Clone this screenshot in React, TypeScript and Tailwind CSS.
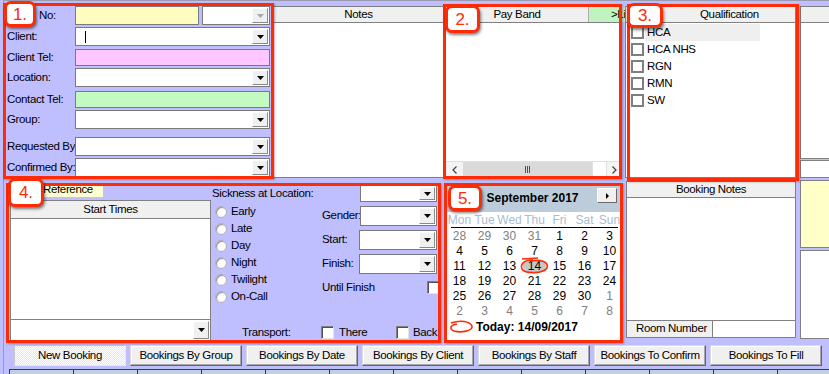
import React from 'react';

const RED = 'border-[#FF2B06]';

// кнопка со стрелкой для комбобоксов
function DownBtn({ disabled }: { disabled?: boolean }) {
  return (
    <div className="w-[16px] h-full shrink-0 bg-[#F0F0F0] flex items-center justify-center border border-t-white border-l-white border-r-[#8A8A8A] border-b-[#8A8A8A]">
      <svg width="7" height="4" viewBox="0 0 7 4">
        <path d="M0 0h7L3.5 4z" fill={disabled ? '#A8A8A8' : '#000'} />
      </svg>
    </div>
  );
}

function Combo({ className, disabled, children }: { className: string; disabled?: boolean; children?: React.ReactNode }) {
  return (
    <div className={`flex items-stretch border border-[#7A7A7A] bg-white p-[1px] ${className}`}>
      <div className="flex-1 flex items-center">{children}</div>
      <DownBtn disabled={disabled} />
    </div>
  );
}

function Header({ children, className = '' }: { children?: React.ReactNode; className?: string }) {
  return (
    <div className={`h-[16px] shrink-0 bg-[#F0F0F0] border-b border-[#808080] flex items-center ${className}`}>
      {children}
    </div>
  );
}

function Radio() {
  return <div className="w-[12px] h-[12px] shrink-0 rounded-full bg-white border border-[#B0B0B0] shadow-[inset_1px_1px_1px_#8C8C8C]" />;
}

function Check() {
  return (
    <div className="w-[13px] h-[13px] shrink-0 bg-white border border-t-[#808080] border-l-[#808080] border-r-[#E4E4E4] border-b-[#E4E4E4] shadow-[inset_1px_1px_0_#505050]" />
  );
}

function Box({ className }: { className: string }) {
  return <div className={`absolute border-[3px] ${RED} shadow-[1px_1px_2px_rgba(0,0,0,0.3)] ${className}`} />;
}

function Badge({ n, className }: { n: number; className: string }) {
  return (
    <div
      className={`absolute flex items-center justify-center bg-white border-[3px] ${RED} rounded-[7px] shadow-[1px_2px_3px_rgba(0,0,0,0.5)] text-[#FF2B06] text-[17px] tracking-normal ${className}`}
    >
      {n}.
    </div>
  );
}

const quals = ['HCA', 'HCA NHS', 'RGN', 'RMN', 'SW'];
const shifts = ['Early', 'Late', 'Day', 'Night', 'Twilight', 'On-Call'];
const dayNames = ['Mon', 'Tue', 'Wed', 'Thu', 'Fri', 'Sat', 'Sun'];

// [число, из другого месяца]
const weeks: [number, boolean][][] = [
  [[28, true], [29, true], [30, true], [31, true], [1, false], [2, false], [3, false]],
  [[4, false], [5, false], [6, false], [7, false], [8, false], [9, false], [10, false]],
  [[11, false], [12, false], [13, false], [14, false], [15, false], [16, false], [17, false]],
  [[18, false], [19, false], [20, false], [21, false], [22, false], [23, false], [24, false]],
  [[25, false], [26, false], [27, false], [28, false], [29, false], [30, false], [1, true]],
  [[2, true], [3, true], [4, true], [5, true], [6, true], [7, true], [8, true]],
];

const tabs = [
  'New Booking',
  'Bookings By Group',
  'Bookings By Date',
  'Bookings By Client',
  'Bookings By Staff',
  'Bookings To Confirm',
  'Bookings To Fill',
];

function LeftForm() {
  return (
    <div className="w-[268px] shrink-0 pl-[3px] flex flex-col">
      <div className="flex items-center h-[19px]">
        <span className="w-[68px] shrink-0 pl-[32px]">No:</span>
        <div className="w-[124px] h-full shrink-0 bg-[#FFFCC0] border border-[#7A7A7A]" />
        <Combo className="w-[68px] h-full ml-[3px] shrink-0" disabled />
      </div>
      <div className="flex items-center h-[19px] mt-[2px]">
        <span className="w-[68px] shrink-0">Client:</span>
        <Combo className="w-[195px] h-full shrink-0">
          <div className="ml-[8px] w-[1px] h-[12px] bg-black" />
        </Combo>
      </div>
      <div className="flex items-center h-[17px] mt-[3px]">
        <span className="w-[68px] shrink-0">Client Tel:</span>
        <div className="w-[195px] h-full shrink-0 bg-[#FFC6FF] border border-[#7A7A7A]" />
      </div>
      <div className="flex items-center h-[19px] mt-[2px]">
        <span className="w-[68px] shrink-0">Location:</span>
        <Combo className="w-[195px] h-full shrink-0" />
      </div>
      <div className="flex items-center h-[17px] mt-[4px]">
        <span className="w-[68px] shrink-0">Contact Tel:</span>
        <div className="w-[195px] h-full shrink-0 bg-[#C2FAC2] border border-[#7A7A7A]" />
      </div>
      <div className="flex items-center h-[19px] mt-[2px]">
        <span className="w-[68px] shrink-0">Group:</span>
        <Combo className="w-[195px] h-full shrink-0" />
      </div>
      <div className="flex items-center h-[19px] mt-[8px]">
        <span className="w-[68px] shrink-0 whitespace-nowrap">Requested By</span>
        <Combo className="w-[195px] h-full shrink-0" />
      </div>
      <div className="flex items-center h-[19px] mt-[2px]">
        <span className="w-[68px] shrink-0 whitespace-nowrap">Confirmed By:</span>
        <Combo className="w-[195px] h-full shrink-0" />
      </div>
    </div>
  );
}

function Calendar() {
  return (
    <div className="ml-[6px] mt-[4px] w-[175px] h-[158px] shrink-0 bg-white flex flex-col text-[12px] tracking-normal">
      <div className="h-[28px] shrink-0 bg-[#BDCCDB] grid grid-cols-[24px_1fr_28px] items-center">
        <div />
        <div className="text-center font-bold">September 2017</div>
        <div className="self-start mt-[4px] ml-[3px] w-[20px] h-[15px] bg-[#F0F0F0] border border-t-white border-l-white border-r-[#6A6A6A] border-b-[#6A6A6A] flex items-center justify-center">
          <svg width="3" height="6" viewBox="0 0 3 6">
            <path d="M0 0L3 3L0 6z" fill="#000" />
          </svg>
        </div>
      </div>
      <div className="h-[15px] shrink-0 grid grid-cols-7 items-center text-[#A9BDD2]">
        {dayNames.map(d => (
          <div key={d} className="text-center">{d}</div>
        ))}
      </div>
      <div className="h-[1px] shrink-0 bg-black mx-[4px]" />
      {weeks.map((w, i) => (
        <div key={i} className="h-[15px] shrink-0 grid grid-cols-7 items-center">
          {w.map(([n, other], j) => (
            <div key={j} className={`text-center ${other ? 'text-[#808080]' : 'text-black'}`}>
              {n === 14 && !other ? (
                <span className="inline-block bg-[#C8C8C8] rounded-full px-[5px] leading-[12px]">14</span>
              ) : (
                n
              )}
            </div>
          ))}
        </div>
      ))}
      <div className="mt-[2px] h-[14px] shrink-0 flex items-center pl-[29px] font-bold">Today: 14/09/2017</div>
    </div>
  );
}

export default function App() {
  return (
    <div className="relative w-[829px] h-[374px] overflow-hidden bg-[#BFBFFF] text-black font-['Liberation_Sans',Arial,sans-serif] text-[11.5px] tracking-[-0.35px] leading-none">
      <div className="ml-[3px] h-full border-l border-t border-[#9A9AB0] pt-[5px] flex flex-col">
        {/* верхний ряд */}
        <div className="flex h-[172px] shrink-0">
          <LeftForm />

          <div className="w-[173px] h-full shrink-0 border border-[#808080] bg-white flex flex-col">
            <Header className="justify-center">Notes</Header>
          </div>

          <div className="w-[177px] h-full shrink-0 border border-[#808080] bg-white flex flex-col">
            <div className="h-[16px] shrink-0 flex border-b border-[#808080]">
              <div className="w-[143px] shrink-0 bg-[#F0F0F0] border-r border-[#B0B0B0] flex items-center justify-center">Pay Band</div>
              <div className="relative w-[36px] shrink-0 bg-[#BFF3BF] flex items-center pl-[22px] overflow-hidden whitespace-nowrap">&gt;Li</div>
            </div>
            <div className="flex-1" />
            <div className="h-[16px] shrink-0 flex border-t border-[#E0E0E0]">
              <div className="w-[17px] shrink-0 bg-[#F4F4F4] flex items-center justify-center">
                <svg width="5" height="8" viewBox="0 0 5 8">
                  <path d="M4.5 0.5L1 4L4.5 7.5" stroke="#404040" fill="none" strokeWidth="1.2" />
                </svg>
              </div>
              <div className="w-[129px] shrink-0 bg-[#DADADA] flex items-center justify-center">
                <div className="flex gap-[1px]">
                  <div className="w-[1px] h-[7px] bg-[#505050]" />
                  <div className="w-[1px] h-[7px] bg-[#505050]" />
                  <div className="w-[1px] h-[7px] bg-[#505050]" />
                </div>
              </div>
              <div className="w-[15px] shrink-0 bg-white border-x border-[#E0E0E0]" />
              <div className="flex-1 bg-[#F4F4F4] flex items-center justify-center">
                <svg width="5" height="8" viewBox="0 0 5 8">
                  <path d="M0.5 0.5L4 4L0.5 7.5" stroke="#404040" fill="none" strokeWidth="1.2" />
                </svg>
              </div>
            </div>
          </div>

          <div className="ml-[3px] w-[171px] h-full shrink-0 border border-[#808080] bg-white flex flex-col">
            <Header className="pl-[74px]">Qualification</Header>
            <div className="flex flex-col pt-[1px]">
              {quals.map((q, i) => (
                <div key={q} className="h-[17px] flex items-center pl-[5px]">
                  <div className="w-[13px] h-[13px] shrink-0 border-2 border-[#7F7F7F] bg-white" />
                  <div className={`ml-[1px] w-[115px] h-full flex items-center pl-[2px] ${i === 0 ? 'bg-[#EFEFEF]' : ''}`}>{q}</div>
                </div>
              ))}
            </div>
          </div>

          <div className="ml-[4px] w-[40px] shrink-0 flex flex-col">
            <div className="h-[153px] shrink-0 border border-[#808080] bg-white flex flex-col">
              <Header />
            </div>
            <div className="mt-[1px] h-[18px] shrink-0 border border-[#808080] bg-white" />
          </div>
        </div>

        {/* средний ряд */}
        <div className="flex mt-[2px] h-[163px] shrink-0">
          <div className="w-[437px] shrink-0 flex">
            <div className="ml-[6px] w-[201px] shrink-0 flex flex-col">
              <div className="mt-[3px] ml-[30px] w-[63px] h-[14px] shrink-0 bg-[#FFFFD2] pl-[3px] flex items-center">Reference</div>
              <div className="mt-[3px] h-[141px] shrink-0 border border-[#808080] bg-white flex flex-col">
                <Header className="h-[18px] justify-center">Start Times</Header>
                <div className="flex-1" />
                <div className="h-[21px] shrink-0 border-t border-[#808080] flex justify-end p-[1px]">
                  <DownBtn />
                </div>
              </div>
            </div>

            <div className="w-[230px] shrink-0 flex flex-col">
              <div className="mt-[5px] h-[17px] shrink-0 flex items-center">
                <span className="flex-1 pl-[1px] whitespace-nowrap">Sickness at Location:</span>
                <Combo className="w-[77px] h-full mr-[4px] shrink-0" />
              </div>
              <div className="flex mt-[1px]">
                <div className="w-[111px] shrink-0 pl-[4px] flex flex-col">
                  {shifts.map(s => (
                    <div key={s} className="h-[17px] flex items-center gap-[4px]">
                      <Radio />
                      <span>{s}</span>
                    </div>
                  ))}
                </div>
                <div className="w-[119px] shrink-0 flex flex-col pt-[3px]">
                  <div className="h-[20px] flex items-center">
                    <span className="w-[38px] shrink-0">Gender:</span>
                    <Combo className="w-[77px] h-full shrink-0" />
                  </div>
                  <div className="h-[20px] mt-[4px] flex items-center">
                    <span className="w-[37px] shrink-0">Start:</span>
                    <Combo className="w-[78px] h-full shrink-0" />
                  </div>
                  <div className="h-[20px] mt-[4px] flex items-center">
                    <span className="w-[37px] shrink-0">Finish:</span>
                    <Combo className="w-[78px] h-full shrink-0" />
                  </div>
                  <div className="h-[13px] mt-[7px] flex items-center">
                    <span className="w-[105px] shrink-0">Until Finish</span>
                    <Check />
                  </div>
                </div>
              </div>
              <div className="mt-auto mb-[4px] h-[13px] shrink-0 flex items-center">
                <span className="w-[110px] shrink-0 pl-[31px]">Transport:</span>
                <Check />
                <span className="w-[62px] shrink-0 pl-[5px]">There</span>
                <Check />
                <span className="pl-[4px]">Back</span>
              </div>
            </div>
          </div>

          <Calendar />

          <div className="ml-[4px] mt-[1px] w-[170px] h-[157px] shrink-0 border border-[#808080] bg-white flex flex-col">
            <Header className="justify-center">Booking Notes</Header>
            <div className="flex-1" />
            <div className="h-[17px] shrink-0 border-t border-[#808080] flex">
              <div className="w-[86px] shrink-0 bg-[#F0F0F0] border-r border-[#808080] flex items-center pl-[9px]">Room Number</div>
            </div>
          </div>

          <div className="ml-[4px] w-[40px] shrink-0 flex flex-col">
            <div className="h-[68px] shrink-0 border border-[#808080] bg-[#FFFFC8]" />
            <div className="mt-[2px] h-[89px] shrink-0 border border-[#808080] bg-white" />
          </div>
        </div>

        {/* вкладки */}
        <div className="mt-[2px] h-[21px] shrink-0 flex gap-[4px] pl-[10px]">
          {tabs.map((t, i) => (
            <div
              key={t}
              className={`w-[112px] h-full shrink-0 flex items-center justify-center whitespace-nowrap border ${
                i === 0
                  ? 'bg-[repeating-conic-gradient(#FFFFFF_0_25%,#E6E6E6_0_50%)] bg-[length:2px_2px] border-t-[#C8C8C8] border-l-[#C8C8C8] border-r-[#E8E8E8] border-b-[#E8E8E8]'
                  : 'bg-[#F0F0F0] border-t-[#DCDCDC] border-l-[#DCDCDC] border-r-[#646464] border-b-[#646464] shadow-[inset_-1px_-1px_0_#A8A8A8,inset_1px_1px_0_#FFFFFF]'
              }`}
            >
              {t}
            </div>
          ))}
        </div>

        <div className="mt-[3px] h-[10px] shrink-0 flex pl-[5px]">
          {Array.from({ length: 13 }).map((_, i) => (
            <div key={i} className="w-[64px] h-full shrink-0 bg-[#C2CFDC] border-t border-l border-[#3C3C3C]" />
          ))}
        </div>
      </div>

      {/* аннотации */}
      <Box className="left-[3px] top-[3px] w-[271px] h-[176px]" />
      <Box className="left-[443px] top-[4px] w-[179px] h-[175px]" />
      <Box className="left-[627px] top-[4px] w-[172px] h-[177px]" />
      <Box className="left-[6px] top-[183px] w-[435px] h-[160px]" />
      <Box className="left-[444px] top-[183px] w-[179px] h-[160px]" />

      <Badge n={1} className="left-[4px] top-[1px] w-[32px] h-[26px]" />
      <Badge n={2} className="left-[445px] top-[5px] w-[35px] h-[28px]" />
      <Badge n={3} className="left-[627px] top-[3px] w-[36px] h-[25px]" />
      <Badge n={4} className="left-[8px] top-[178px] w-[36px] h-[29px]" />
      <Badge n={5} className="left-[448px] top-[185px] w-[34px] h-[26px]" />

      <svg className="absolute left-0 top-0 pointer-events-none" width="829" height="374" viewBox="0 0 829 374">
        <path
          d="M522 259 L538 258 M533 260 C 524 260, 520 264, 522 269 C 525 274, 543 274, 547 268 C 549 262, 541 259, 531 261"
          stroke="#FF2B06"
          strokeWidth="1.6"
          fill="none"
        />
        <path
          d="M451 323 C 460 320, 470 321, 472 326 C 473 331, 461 333, 454 331 C 449 329, 450 325, 457 324"
          stroke="#FF2B06"
          strokeWidth="1.6"
          fill="none"
        />
      </svg>
    </div>
  );
}
